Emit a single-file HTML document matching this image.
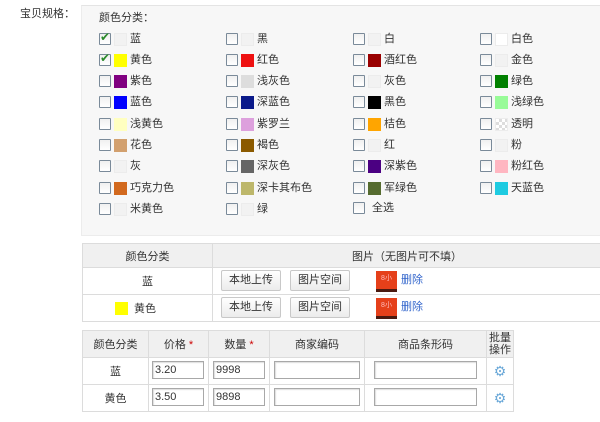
<!DOCTYPE html><html><head><meta charset="utf-8"><style>
body{margin:0;width:600px;height:422px;background:#fff;font-family:"Liberation Sans","Noto Sans CJK SC",sans-serif;font-size:11px;color:#333;position:relative;overflow:hidden}
.a{position:absolute}
.panel{position:absolute;left:81px;top:5px;width:519px;height:229px;background:#f7f7f7;border-top:1px solid #e4e4e4;border-left:1px solid #ececec;border-bottom:1px solid #ececec}
.cb{position:absolute;width:10px;height:10px;border:1px solid #7a8a99;background:linear-gradient(#f0f0f0,#fff);border-radius:1px}
.sw{position:absolute;width:13px;height:13px;background:#f2f2f2;border:1px solid #ececec;box-sizing:border-box}
.t{position:absolute;line-height:13px;white-space:nowrap}
table{position:absolute;border-collapse:collapse}
td{border:1px solid #dcdcdc;text-align:center;padding:0}
.h td{background:#f0f0f0}
.btn{display:inline-block;position:absolute;height:19px;width:58px;border:1px solid #c8c8c8;border-radius:2px;background:linear-gradient(#fff,#ececec);line-height:19px;text-align:center}
.in{position:absolute;border:1px solid #a8a8a8;box-shadow:inset 1px 1px 1px #ddd;background:#fff;line-height:16px;text-align:left;padding-left:2px;box-sizing:border-box;height:18px}
.img{position:absolute;width:21px;height:21px;background:#e5401a;border-bottom:3px solid #4a1a10;box-sizing:border-box;color:#fbb;font-size:7px;line-height:16px;text-align:center}
.st{color:#c00}
</style></head><body>
<div class="t" style="left:20px;top:8px">宝贝规格：</div>
<div class="panel"></div>
<div class="t" style="left:99px;top:12px">颜色分类：</div>
<div class="cb" style="left:99px;top:33px"></div><span class="a" style="left:100px;top:30px;color:#2a8a2a;font-size:12px">✔</span><div class="sw" style="left:114px;top:33px"></div><div class="t" style="left:130px;top:33px">蓝</div>
<div class="cb" style="left:99px;top:54px"></div><span class="a" style="left:100px;top:51px;color:#2a8a2a;font-size:12px">✔</span><div class="sw" style="left:114px;top:54px;background:#ffff00;border:0"></div><div class="t" style="left:130px;top:54px">黄色</div>
<div class="cb" style="left:99px;top:75px"></div><div class="sw" style="left:114px;top:75px;background:#800080;border:0"></div><div class="t" style="left:130px;top:75px">紫色</div>
<div class="cb" style="left:99px;top:96px"></div><div class="sw" style="left:114px;top:96px;background:#0000ff;border:0"></div><div class="t" style="left:130px;top:96px">蓝色</div>
<div class="cb" style="left:99px;top:118px"></div><div class="sw" style="left:114px;top:118px;background:#ffffc0;border:0"></div><div class="t" style="left:130px;top:118px">浅黄色</div>
<div class="cb" style="left:99px;top:139px"></div><div class="sw" style="left:114px;top:139px;background:#d2a06e;border:0"></div><div class="t" style="left:130px;top:139px">花色</div>
<div class="cb" style="left:99px;top:160px"></div><div class="sw" style="left:114px;top:160px"></div><div class="t" style="left:130px;top:160px">灰</div>
<div class="cb" style="left:99px;top:182px"></div><div class="sw" style="left:114px;top:182px;background:#d2691e;border:0"></div><div class="t" style="left:130px;top:182px">巧克力色</div>
<div class="cb" style="left:99px;top:203px"></div><div class="sw" style="left:114px;top:203px"></div><div class="t" style="left:130px;top:203px">米黄色</div>

<div class="cb" style="left:226px;top:33px"></div><div class="sw" style="left:241px;top:33px"></div><div class="t" style="left:257px;top:33px">黑</div>
<div class="cb" style="left:226px;top:54px"></div><div class="sw" style="left:241px;top:54px;background:#ee1111;border:0"></div><div class="t" style="left:257px;top:54px">红色</div>
<div class="cb" style="left:226px;top:75px"></div><div class="sw" style="left:241px;top:75px;background:#dddddd;border:0"></div><div class="t" style="left:257px;top:75px">浅灰色</div>
<div class="cb" style="left:226px;top:96px"></div><div class="sw" style="left:241px;top:96px;background:#0b1a8a;border:0"></div><div class="t" style="left:257px;top:96px">深蓝色</div>
<div class="cb" style="left:226px;top:118px"></div><div class="sw" style="left:241px;top:118px;background:#dda0dd;border:0"></div><div class="t" style="left:257px;top:118px">紫罗兰</div>
<div class="cb" style="left:226px;top:139px"></div><div class="sw" style="left:241px;top:139px;background:#8b5a00;border:0"></div><div class="t" style="left:257px;top:139px">褐色</div>
<div class="cb" style="left:226px;top:160px"></div><div class="sw" style="left:241px;top:160px;background:#666;border:0"></div><div class="t" style="left:257px;top:160px">深灰色</div>
<div class="cb" style="left:226px;top:182px"></div><div class="sw" style="left:241px;top:182px;background:#bdb76b;border:0"></div><div class="t" style="left:257px;top:182px">深卡其布色</div>
<div class="cb" style="left:226px;top:203px"></div><div class="sw" style="left:241px;top:203px"></div><div class="t" style="left:257px;top:203px">绿</div>

<div class="cb" style="left:353px;top:33px"></div><div class="sw" style="left:368px;top:33px"></div><div class="t" style="left:384px;top:33px">白</div>
<div class="cb" style="left:353px;top:54px"></div><div class="sw" style="left:368px;top:54px;background:#990000;border:0"></div><div class="t" style="left:384px;top:54px">酒红色</div>
<div class="cb" style="left:353px;top:75px"></div><div class="sw" style="left:368px;top:75px"></div><div class="t" style="left:384px;top:75px">灰色</div>
<div class="cb" style="left:353px;top:96px"></div><div class="sw" style="left:368px;top:96px;background:#000;border:0"></div><div class="t" style="left:384px;top:96px">黑色</div>
<div class="cb" style="left:353px;top:118px"></div><div class="sw" style="left:368px;top:118px;background:#ffa500;border:0"></div><div class="t" style="left:384px;top:118px">桔色</div>
<div class="cb" style="left:353px;top:139px"></div><div class="sw" style="left:368px;top:139px"></div><div class="t" style="left:384px;top:139px">红</div>
<div class="cb" style="left:353px;top:160px"></div><div class="sw" style="left:368px;top:160px;background:#4b0082;border:0"></div><div class="t" style="left:384px;top:160px">深紫色</div>
<div class="cb" style="left:353px;top:182px"></div><div class="sw" style="left:368px;top:182px;background:#556b2f;border:0"></div><div class="t" style="left:384px;top:182px">军绿色</div>
<div class="cb" style="left:353px;top:202px"></div><div class="t" style="left:372px;top:202px">全选</div>

<div class="cb" style="left:480px;top:33px"></div><div class="sw" style="left:495px;top:33px;background:#fff"></div><div class="t" style="left:511px;top:33px">白色</div>
<div class="cb" style="left:480px;top:54px"></div><div class="sw" style="left:495px;top:54px"></div><div class="t" style="left:511px;top:54px">金色</div>
<div class="cb" style="left:480px;top:75px"></div><div class="sw" style="left:495px;top:75px;background:#008000;border:0"></div><div class="t" style="left:511px;top:75px">绿色</div>
<div class="cb" style="left:480px;top:96px"></div><div class="sw" style="left:495px;top:96px;background:#98fb98;border:0"></div><div class="t" style="left:511px;top:96px">浅绿色</div>
<div class="cb" style="left:480px;top:118px"></div><div class="sw" style="left:495px;top:118px;background:repeating-conic-gradient(#ddd 0 25%,#fff 0 50%) 0 0/6px 6px"></div><div class="t" style="left:511px;top:118px">透明</div>
<div class="cb" style="left:480px;top:139px"></div><div class="sw" style="left:495px;top:139px"></div><div class="t" style="left:511px;top:139px">粉</div>
<div class="cb" style="left:480px;top:160px"></div><div class="sw" style="left:495px;top:160px;background:#ffb6c1;border:0"></div><div class="t" style="left:511px;top:160px">粉红色</div>
<div class="cb" style="left:480px;top:182px"></div><div class="sw" style="left:495px;top:182px;background:#1ecbe1;border:0"></div><div class="t" style="left:511px;top:182px">天蓝色</div>

<table style="left:82px;top:243px;width:520px">
<tr class="h" style="height:24px"><td style="width:129px">颜色分类</td><td>图片（无图片可不填）</td></tr>
<tr style="height:27px"><td>蓝</td><td></td></tr>
<tr style="height:27px"><td><span style="display:inline-block;width:13px;height:13px;background:#ff0;vertical-align:-3px;margin-right:6px;margin-left:-24px"></span>黄色</td><td></td></tr>
</table>
<div class="btn" style="left:221px;top:270px">本地上传</div><div class="btn" style="left:290px;top:270px">图片空间</div>
<div class="img" style="left:376px;top:271px">8小</div><div class="t" style="left:401px;top:274px;color:#36c">删除</div>
<div class="btn" style="left:221px;top:297px">本地上传</div><div class="btn" style="left:290px;top:297px">图片空间</div>
<div class="img" style="left:376px;top:298px">8小</div><div class="t" style="left:401px;top:301px;color:#36c">删除</div>

<table style="left:82px;top:330px;width:431px;table-layout:fixed">
<colgroup><col style="width:66px"><col style="width:60px"><col style="width:61px"><col style="width:95px"><col style="width:122px"><col style="width:27px"></colgroup>
<tr class="h" style="height:27px"><td>颜色分类</td><td>价格 <span class="st">*</span></td><td>数量 <span class="st">*</span></td><td>商家编码</td><td>商品条形码</td><td style="line-height:12px">批量<br>操作</td></tr>
<tr style="height:27px"><td>蓝</td><td></td><td></td><td></td><td></td><td style="color:#6aa8d8;font-size:14px">⚙</td></tr>
<tr style="height:27px"><td>黄色</td><td></td><td></td><td></td><td></td><td style="color:#6aa8d8;font-size:14px">⚙</td></tr>
</table>
<div class="in" style="left:152px;top:361px;width:52px">3.20</div><div class="in" style="left:213px;top:361px;width:52px">9998</div><div class="in" style="left:274px;top:361px;width:86px"></div><div class="in" style="left:374px;top:361px;width:103px"></div>
<div class="in" style="left:152px;top:388px;width:52px">3.50</div><div class="in" style="left:213px;top:388px;width:52px">9898</div><div class="in" style="left:274px;top:388px;width:86px"></div><div class="in" style="left:374px;top:388px;width:103px"></div>
</body></html>
